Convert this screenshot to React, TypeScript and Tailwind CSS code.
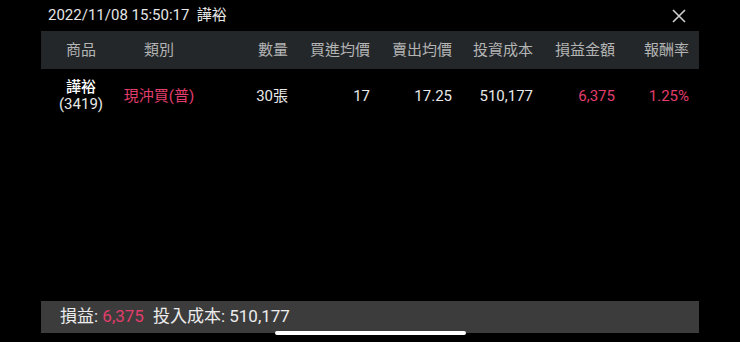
const cjk = "font-['Roboto','Noto_Sans_CJK_TC',sans-serif]";

const headers = [
  { label: '商品', cls: 'w-[80px] text-center' },
  { label: '類別', cls: 'w-[76px] text-center' },
  { label: '數量', cls: 'w-[91px] text-right' },
  { label: '買進均價', cls: 'w-[82px] text-right' },
  { label: '賣出均價', cls: 'w-[82px] text-right' },
  { label: '投資成本', cls: 'w-[81px] text-right' },
  { label: '損益金額', cls: 'w-[82px] text-right' },
  { label: '報酬率', cls: 'w-[74px] text-right' },
];

export default function App() {
  return (
    <div className={`w-[740px] h-[342px] bg-black flex flex-col ${cjk}`}>
      <div className="h-[31px] flex items-center justify-between pl-[48px] pr-[54px] text-[15px] text-[#e6e6e6]">
        <span>2022/11/08 15:50:17&nbsp;&nbsp;譁裕</span>
        <svg width="14" height="14" viewBox="0 0 14 14" className="text-[#cfcfcf]">
          <path d="M1 1 L13 13 M13 1 L1 13" stroke="currentColor" strokeWidth="1.6" />
        </svg>
      </div>

      <div className="mx-[41px] flex-1 flex flex-col">
        <div className="h-[38px] bg-[#23272a] flex items-center text-[15px] text-[#b4b4b4]">
          {headers.map((h) => (
            <div key={h.label} className={h.cls}>
              {h.label}
            </div>
          ))}
        </div>

        <div className="flex items-center pt-[10px] text-[15px] text-[#e8e8e8]">
          <div className="w-[80px] flex flex-col items-center leading-[17px]">
            <span className="font-medium text-white">譁裕</span>
            <span>(3419)</span>
          </div>
          <div className="w-[76px] text-center text-[#e23d6b]">現沖買(普)</div>
          <div className="w-[91px] text-right">30張</div>
          <div className="w-[82px] text-right">17</div>
          <div className="w-[82px] text-right">17.25</div>
          <div className="w-[81px] text-right">510,177</div>
          <div className="w-[82px] text-right text-[#e23d6b]">6,375</div>
          <div className="w-[74px] text-right text-[#e23d6b]">1.25%</div>
        </div>
      </div>

      <div className="relative mx-[41px] mb-[9px] h-[32px] bg-[#3c3c3c] flex items-center pl-[19px] text-[17px] text-[#ececec]">
        <span>損益:&nbsp;</span>
        <span className="text-[#e23d6b]">6,375</span>
        <span className="ml-[9px]">投入成本:&nbsp;510,177</span>
        <div className="absolute left-[234px] bottom-[-2px] w-[191px] h-[4px] rounded-full bg-white" />
      </div>
    </div>
  );
}
